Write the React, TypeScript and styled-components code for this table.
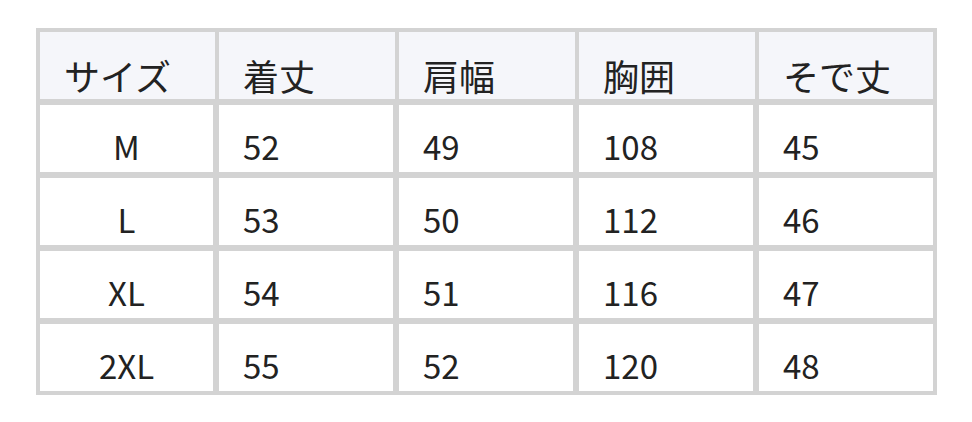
import * as React from "react";
import styled, { createGlobalStyle } from "styled-components";

const GlobalStyle = createGlobalStyle`
  html, body {
    margin: 0;
    padding: 0;
    background: #ffffff;
  }
  body {
    font-family: "Noto Sans CJK JP", "Noto Sans", sans-serif;
    color: #222222;
  }
`;

const Page = styled.div`
  padding: 28px 0 0 36px;
`;

const SizeTable = styled.div`
  width: 893px;
  padding: 4px;
  background: #d3d3d3;
  display: flex;
  flex-direction: column;
  gap: 6px;
`;

const HeadRow = styled.div`
  display: grid;
  grid-template-columns: 175px 176px 176px 176px 174px;
  column-gap: 4px;
`;

const BodyRow = styled.div`
  display: grid;
  grid-template-columns: 173px 174px 174px 174px 174px;
  column-gap: 6px;
`;

const HeadCell = styled.div`
  height: 67px;
  box-sizing: border-box;
  padding: 25px 0 0 24px;
  background: #f5f6fa;
  font-size: 36px;
  line-height: 1;
  white-space: nowrap;
`;

const Cell = styled.div<{ $center?: boolean }>`
  height: 67px;
  box-sizing: border-box;
  padding: 25px 0 0 ${p => (p.$center ? "0" : "24px")};
  background: #ffffff;
  font-size: 33px;
  line-height: 1;
  text-align: ${p => (p.$center ? "center" : "left")};
  white-space: nowrap;
`;

const headers = ["サイズ", "着丈", "肩幅", "胸囲", "そで丈"];

const rows = [
  ["M", "52", "49", "108", "45"],
  ["L", "53", "50", "112", "46"],
  ["XL", "54", "51", "116", "47"],
  ["2XL", "55", "52", "120", "48"]
];

export default function App() {
  return (
    <React.Fragment>
      <GlobalStyle />
      <Page>
        <SizeTable>
          <HeadRow>
            {headers.map(h => (
              <HeadCell key={h}>{h}</HeadCell>
            ))}
          </HeadRow>
          {rows.map(r => (
            <BodyRow key={r[0]}>
              {r.map((v, i) => (
                <Cell key={i} $center={i === 0}>
                  {v}
                </Cell>
              ))}
            </BodyRow>
          ))}
        </SizeTable>
      </Page>
    </React.Fragment>
  );
}
